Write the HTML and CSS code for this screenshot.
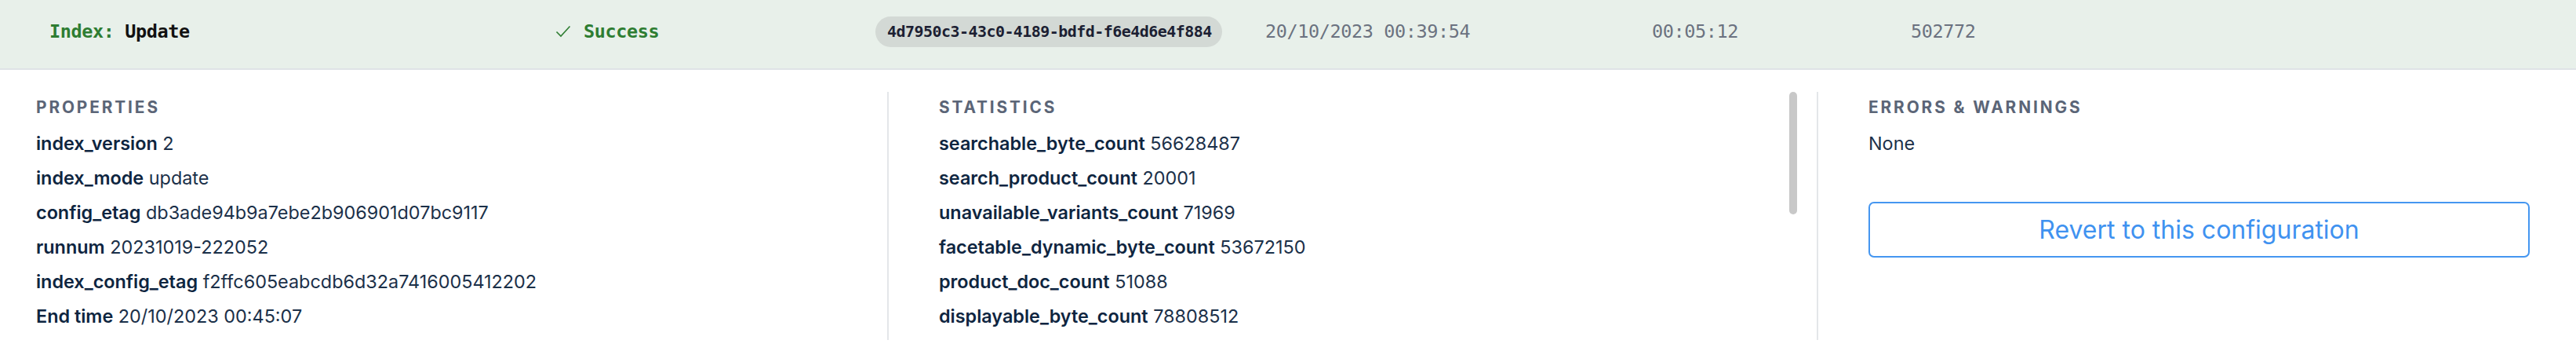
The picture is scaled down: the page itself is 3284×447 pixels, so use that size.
FILE: index.html
```html
<!DOCTYPE html>
<html lang="en">
<head>
<meta charset="utf-8">
<title>Index update</title>
<link rel="stylesheet" href="styles.css">
</head>
<body>
<div class="run">
  <div class="run-head">
    <div class="cell title"><span class="kind">Index:</span> <span class="name">Update</span></div>
    <div class="cell status">
      <svg class="check" width="20" height="16" viewBox="0 0 20 16"><polyline points="1.5,8.5 7,14 18.5,1.5" fill="none" stroke="#2e7d32" stroke-width="1.6"/></svg>
      <span>Success</span>
    </div>
    <div class="cell"><span class="pill">4d7950c3-43c0-4189-bdfd-f6e4d6e4f884</span></div>
    <div class="cell muted">20/10/2023 00:39:54</div>
    <div class="cell muted">00:05:12</div>
    <div class="cell muted">502772</div>
  </div>
  <div class="run-body">
    <section class="col">
      <h3 class="col-title">Properties</h3>
      <ul class="kv">
        <li><b>index_version</b> 2</li>
        <li><b>index_mode</b> update</li>
        <li><b>config_etag</b> db3ade94b9a7ebe2b906901d07bc9117</li>
        <li><b>runnum</b> 20231019-222052</li>
        <li><b>index_config_etag</b> f2ffc605eabcdb6d32a7416005412202</li>
        <li><b>End time</b> 20/10/2023 00:45:07</li>
      </ul>
    </section>
    <section class="col col-div col-stats">
      <h3 class="col-title">Statistics</h3>
      <ul class="kv">
        <li><b>searchable_byte_count</b> 56628487</li>
        <li><b>search_product_count</b> 20001</li>
        <li><b>unavailable_variants_count</b> 71969</li>
        <li><b>facetable_dynamic_byte_count</b> 53672150</li>
        <li><b>product_doc_count</b> 51088</li>
        <li><b>displayable_byte_count</b> 78808512</li>
      </ul>
      <div class="thumb"></div>
    </section>
    <section class="col col-div col-errors">
      <h3 class="col-title">Errors &amp; Warnings</h3>
      <ul class="kv">
        <li>None</li>
      </ul>
      <button class="revert">Revert to this configuration</button>
    </section>
  </div>
</div>
</body>
</html>
```
FILE: styles.css
```css
html, body {
  margin: 0;
  padding: 0;
  background: #ffffff;
}
body {
  font-family: Inter, "Noto Sans", sans-serif;
  color: #102a43;
}
.run-head {
  display: grid;
  grid-template-columns: 645px 408px 497px 493px 330px 1fr;
  align-items: center;
  height: 80px;
  padding: 0 0 7px 63px;
  background: #e8f0ea;
  border-bottom: 2px solid #dfe3e6;
  font-family: "DejaVu Sans Mono", monospace;
  font-size: 23.5px;
  letter-spacing: -0.4px;
}
.cell {
  white-space: nowrap;
}
.title .kind {
  color: #2e7d32;
  font-weight: 600;
}
.title .name {
  color: #111111;
  font-weight: 700;
}
.status {
  display: flex;
  align-items: center;
  gap: 16px;
  color: #2e7d32;
  font-weight: 600;
}
.check {
  display: block;
}
.pill {
  display: inline-block;
  height: 39px;
  line-height: 39px;
  padding: 0 13px 0 15px;
  border-radius: 20px;
  background: #d3d9d5;
  color: #1c1f33;
  font-size: 20px;
  letter-spacing: -0.55px;
  font-weight: 700;
}
.muted {
  color: #6b7280;
}
.run-body {
  display: grid;
  grid-template-columns: 1085px 1185px 1fr;
  padding: 28px 0 0 46px;
}
.col {
  padding: 4px 0 14px 0;
  position: relative;
}
.col-div {
  border-left: 2px solid #e4e6e9;
  padding-left: 64px;
}
.col-errors {
  padding-right: 59px;
}
.col-title {
  margin: 0;
  height: 32px;
  line-height: 32px;
  font-size: 20.8px;
  font-weight: 700;
  letter-spacing: 2.9px;
  text-transform: uppercase;
  color: #5b6577;
}
.kv {
  list-style: none;
  margin: 14px 0 0 0;
  padding: 0;
  display: flex;
  flex-direction: column;
  gap: 12px;
}
.kv li {
  height: 32px;
  line-height: 32px;
  font-size: 23.4px;
  color: #1b3049;
  white-space: nowrap;
}
.kv b {
  font-weight: 600;
  color: #0e2540;
}
.thumb {
  position: absolute;
  top: 0;
  right: 25px;
  width: 10px;
  height: 156px;
  border-radius: 5px;
  background: #c8c8c8;
}
.revert {
  display: block;
  width: 100%;
  height: 71px;
  margin-top: 58px;
  border: 2px solid #4596f0;
  border-radius: 7px;
  background: #ffffff;
  color: #3f92f0;
  font-family: Inter, "Noto Sans", sans-serif;
  font-size: 32px;
  font-weight: 400;
}
```
